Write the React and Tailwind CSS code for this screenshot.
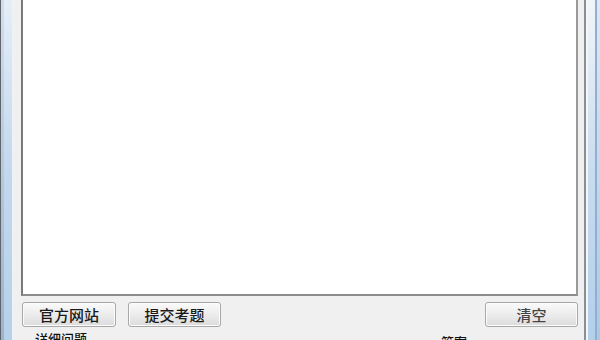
const font = { fontFamily: '"Noto Sans CJK SC", "Noto Sans", sans-serif' };

function WinButton({ children, className = '' }) {
  return (
    <button
      className={`h-[25px] rounded-[3px] border border-[#a8a8a8] bg-gradient-to-b from-[#fafafa] via-[#ececec] to-[#dcdcdc] text-[15px] font-medium leading-none text-[#1a1a1a] shadow-[inset_0_0_0_1px_#fcfcfc] ${className}`}
    >
      {children}
    </button>
  );
}

export default function App() {
  return (
    <div className="flex h-[340px] w-[600px] overflow-hidden bg-[#f0f0f0]" style={font}>
      {/* left window frame */}
      <div className="flex w-[14px] shrink-0">
        <div className="w-[1px] bg-[#5c6670]" />
        <div className="w-[3px] bg-gradient-to-b from-[#d6dde6] to-[#9fb2c8]" />
        <div className="w-[8px] bg-gradient-to-b from-[#e4eef8] via-[#c2d8ee] to-[#b7d1ea]" />
        <div className="w-[2px] bg-[#eef2f6]" />
      </div>

      {/* dialog body */}
      <div className="flex min-w-0 flex-1 flex-col pl-[7px] pr-[6px]">
        <div className="h-[296px] shrink-0 border-x-2 border-b-2 border-l-[#7a7a7a] border-r-[#9a9a9a] border-b-[#8c8c8c] bg-white" />

        <div className="mt-[6px] flex items-center">
          <WinButton className="ml-[1px] w-[94px]">官方网站</WinButton>
          <WinButton className="ml-[12px] w-[93px]">提交考题</WinButton>
          <WinButton className="ml-auto w-[93px] text-[#444]">清空</WinButton>
        </div>

        <div className="mt-[5px] flex text-[13px] font-medium leading-none text-[#111]">
          <span className="ml-[14px]">详细问题</span>
          <span className="ml-[354px] mt-[3px]">答案</span>
        </div>
      </div>

      {/* right window frame */}
      <div className="flex w-[16px] shrink-0">
        <div className="w-[2px] bg-[#8a8f96]" />
        <div className="w-[2px] bg-[#f4f6f8]" />
        <div className="w-[7px] bg-gradient-to-b from-[#f2f5f8] via-[#c9dcef] to-[#b3cfea]" />
        <div className="w-[2px] bg-[#8fb0d2]" />
        <div className="w-[3px] bg-gradient-to-b from-[#dfe8f2] to-[#aec8e2]" />
      </div>
    </div>
  );
}
